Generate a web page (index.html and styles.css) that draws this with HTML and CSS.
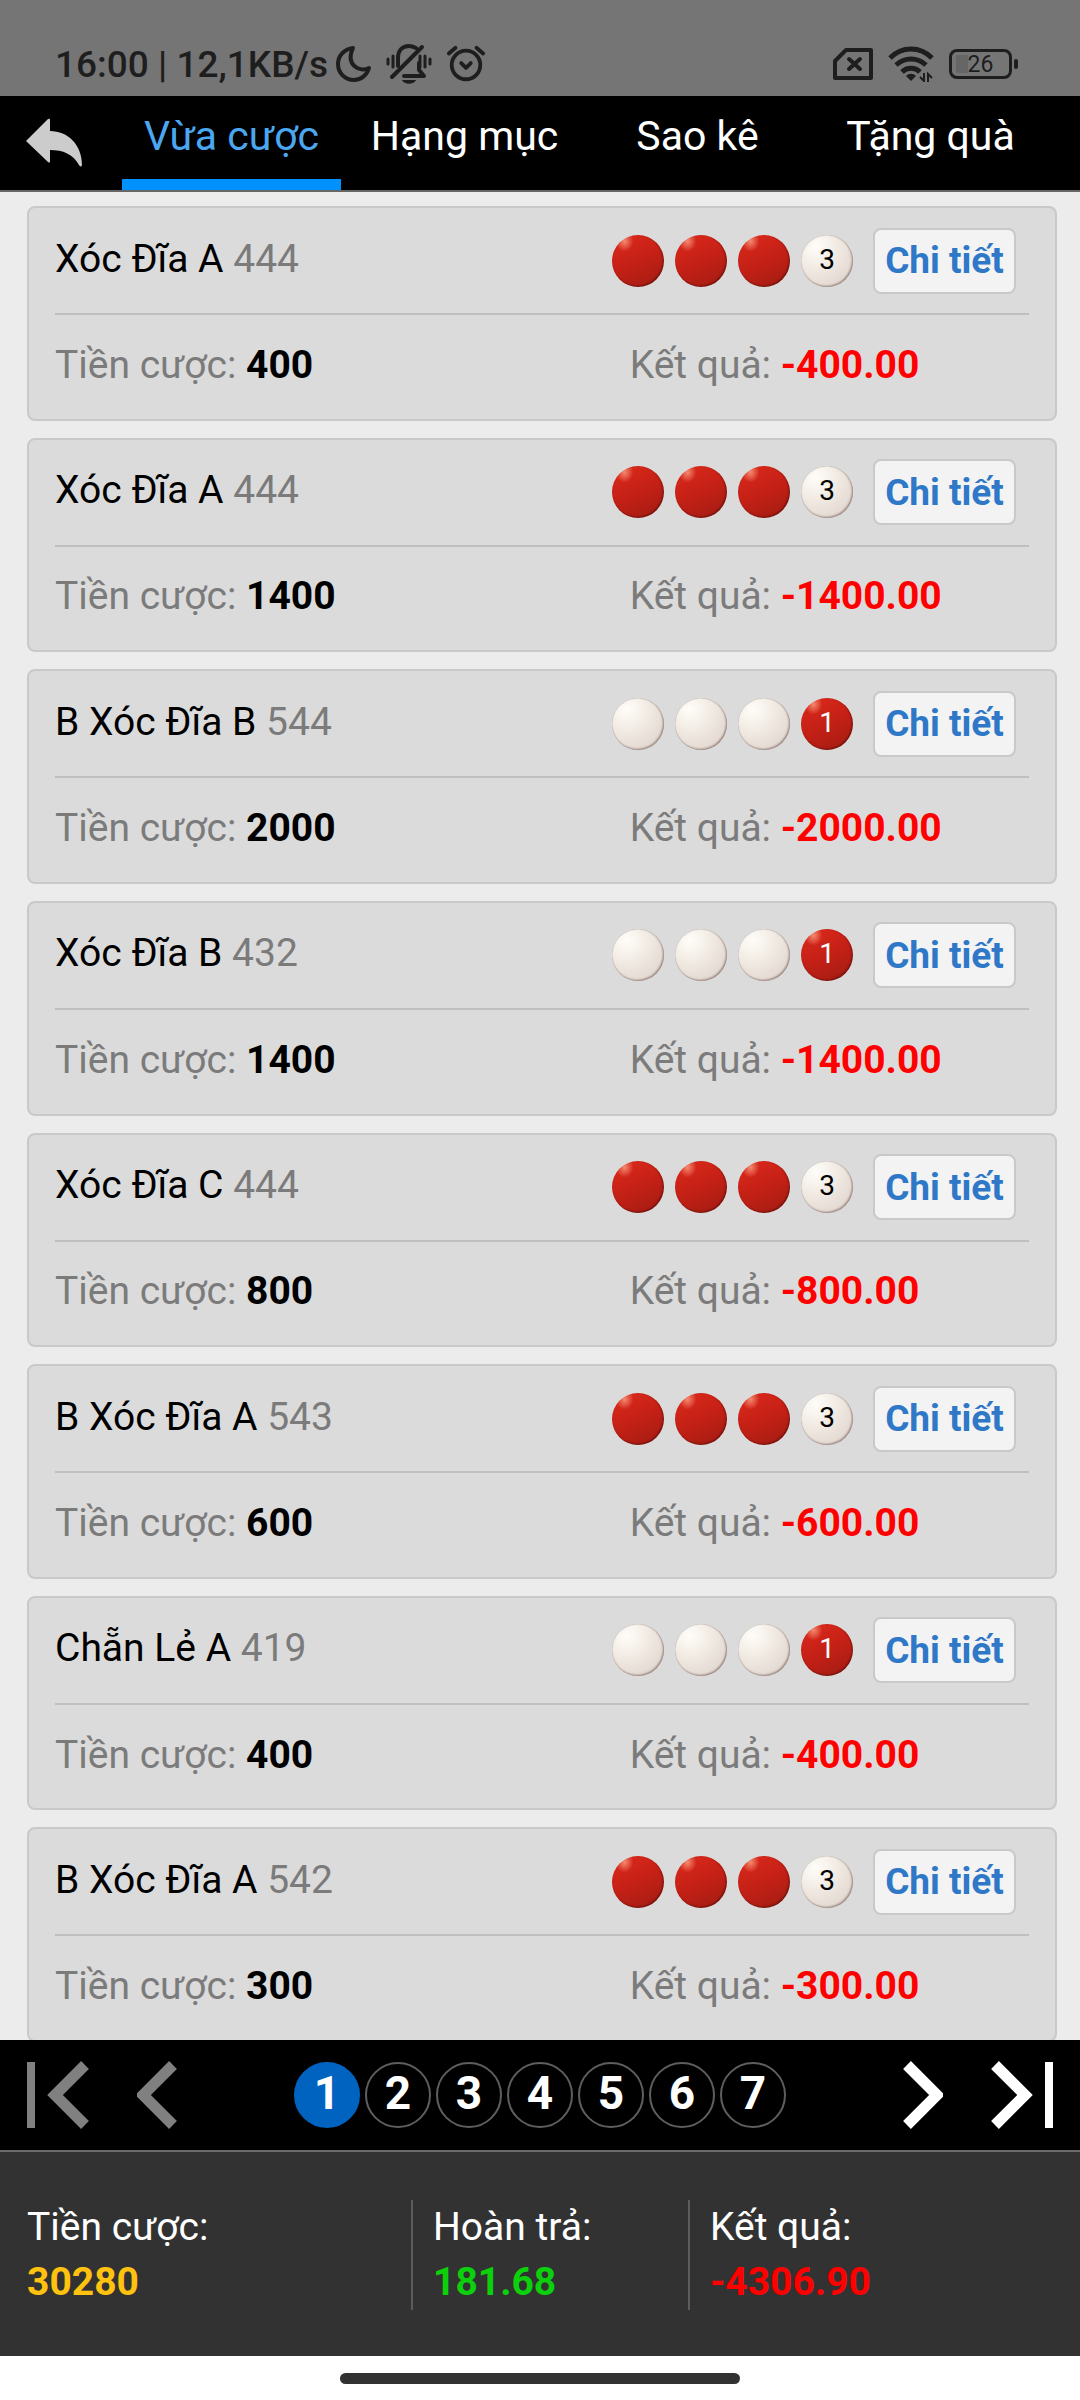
FILE: index.html
```
<!DOCTYPE html>
<html lang="vi">

<head>
    <meta charset="UTF-8">
    <meta name="viewport" content="width=device-width, initial-scale=1.0">
    <title>Vừa cược</title>
    <link rel="stylesheet" href="styles.css">
</head>

<body>
    <div class="status-bar">
        <span class="status-text">16:00 | 12,1KB/s</span>
        <svg width="36" height="38" viewBox="0 0 36 38" fill="none" stroke="#1e1e1e" stroke-width="4" stroke-linejoin="round">
            <path d="M17 3 C8 4 2 11 2 19 C2 28 9 35 18 35 C25 35 31 30 33 23 C24 28 9 20 17 3 Z"/>
        </svg>
        <svg class="icon-mute" width="46" height="40" viewBox="0 0 46 40" fill="none" stroke="#1e1e1e" stroke-width="3" stroke-linecap="round">
            <path d="M2 15v5M7 12v11M44 15v5M39 12v11M34 12v11" />
            <path d="M12 22v-8c0-7 4-12 11-12 3 0 5 1 7 2" stroke-width="4"/>
            <path d="M6 33 L36 3" stroke-width="4"/>
            <path d="M18 32h20l-5-6v-7" stroke-width="4" stroke-linejoin="round"/>
            <path d="M16 36h14c-2 5-12 5-14 0z" fill="#1e1e1e" stroke="none"/>
        </svg>
        <svg width="40" height="38" viewBox="0 0 42 38" fill="none" stroke="#1e1e1e" stroke-width="4" stroke-linecap="round" stroke-linejoin="round">
            <circle cx="21" cy="20" r="15"/>
            <path d="M16 18l5 5 5-5M3 8l7-6M39 8l-7-6"/>
        </svg>
        <div class="status-right">
            <svg width="40" height="32" viewBox="0 0 40 32" fill="none" stroke="#1e1e1e" stroke-width="4" stroke-linejoin="round">
                <path d="M13 2h25v28H2V13z"/>
                <path d="M16 11l11 10M27 11l-11 10" stroke-linecap="round"/>
            </svg>
            <svg width="46" height="36" viewBox="0 0 46 36" fill="none" stroke="#1e1e1e" stroke-width="5">
                <path d="M2 12c12-12 30-12 42 0M8 19c9-8 21-8 30 0M14 26c5-5 13-5 18 0"/>
                <path d="M18 30c3-3 7-3 10 0l-5 5z" fill="#1e1e1e" stroke="none"/>
                <path d="M36 27v8l-4-4M40 36v-8l4 4" stroke-width="2"/>
            </svg>
            <div class="battery"><span>26</span></div>
        </div>
    </div>

    <nav class="top-nav">
        <a href="#" class="back" aria-label="Quay lại">
            <svg width="56" height="50" viewBox="0 0 56 50" fill="#cccccc">
                <path d="M0 23 L22 1 Q24 0 24 2 V13 C42 13 56 27 56 47 Q55 50 53 47 C47 36 37 32 24 32 V43 Q24 46 22 44 Z"/>
            </svg>
        </a>
        <div class="tabs">
            <a href="#" class="tab active">Vừa cược</a>
            <a href="#" class="tab">Hạng mục</a>
            <a href="#" class="tab">Sao kê</a>
            <a href="#" class="tab">Tặng quà</a>
        </div>
    </nav>

    <main>
        <!-- bet cards will be added here -->
        <div class="bet-list" id="betList"></div>
    </main>

    <div class="pagination">
        <button class="page-arrow" disabled aria-label="Trang đầu">
            <svg width="62" height="68" viewBox="0 0 62 68" fill="none" stroke="currentColor">
                <path d="M4 1v66" stroke-width="8"/>
                <path d="M58 4L28 34l30 30" stroke-width="11"/>
            </svg>
        </button>
        <button class="page-arrow" disabled aria-label="Trang trước">
            <svg width="40" height="68" viewBox="0 0 40 68" fill="none" stroke="currentColor">
                <path d="M36 4L6 34l30 30" stroke-width="11"/>
            </svg>
        </button>
        <div class="pages">
            <button class="page current">1</button>
            <button class="page">2</button>
            <button class="page">3</button>
            <button class="page">4</button>
            <button class="page">5</button>
            <button class="page">6</button>
            <button class="page">7</button>
        </div>
        <button class="page-arrow" aria-label="Trang sau">
            <svg width="40" height="68" viewBox="0 0 40 68" fill="none" stroke="currentColor">
                <path d="M4 4l30 30L4 64" stroke-width="11"/>
            </svg>
        </button>
        <button class="page-arrow" aria-label="Trang cuối">
            <svg width="62" height="68" viewBox="0 0 62 68" fill="none" stroke="currentColor">
                <path d="M58 1v66" stroke-width="8"/>
                <path d="M4 4l30 30L4 64" stroke-width="11"/>
            </svg>
        </button>
    </div>

    <footer class="summary">
        <div class="total">
            <div>Tiền cược:</div>
            <div class="amount yellow">30280</div>
        </div>
        <div class="total">
            <div>Hoàn trả:</div>
            <div class="amount green">181.68</div>
        </div>
        <div class="total">
            <div>Kết quả:</div>
            <div class="amount red">-4306.90</div>
        </div>
    </footer>

    <div class="home-bar"><span></span></div>

    <script>
        // red: number of red balls out of four
        const bets = [
            { game: 'Xóc Đĩa A', round: 444, red: 3, stake: 400 },
            { game: 'Xóc Đĩa A', round: 444, red: 3, stake: 1400 },
            { game: 'B Xóc Đĩa B', round: 544, red: 1, stake: 2000 },
            { game: 'Xóc Đĩa B', round: 432, red: 1, stake: 1400 },
            { game: 'Xóc Đĩa C', round: 444, red: 3, stake: 800 },
            { game: 'B Xóc Đĩa A', round: 543, red: 3, stake: 600 },
            { game: 'Chẵn Lẻ A', round: 419, red: 1, stake: 400 },
            { game: 'B Xóc Đĩa A', round: 542, red: 3, stake: 300 }
        ];

        const betList = document.getElementById('betList');

        bets.forEach((bet) => {
            const many = bet.red === 3 ? 'ball-red' : 'ball-white';
            const last = bet.red === 3 ? 'ball-white' : 'ball-red';
            const card = document.createElement('div');
            card.className = 'card';
            card.innerHTML = `
                <div class="card-top">
                    <div class="game">${bet.game} <span>${bet.round}</span></div>
                    <div class="balls">
                        <span class="ball ${many}"></span>
                        <span class="ball ${many}"></span>
                        <span class="ball ${many}"></span>
                        <span class="ball ${last}">${bet.red}</span>
                    </div>
                    <button class="detail-btn">Chi tiết</button>
                </div>
                <div class="card-bottom">
                    <div>Tiền cược: <b>${bet.stake}</b></div>
                    <div>Kết quả: <b class="loss">-${bet.stake}.00</b></div>
                </div>
            `;
            betList.appendChild(card);
        });
    </script>
</body>

</html>
```
FILE: styles.css
```
* {
    box-sizing: border-box;
}

body {
    font-family: Roboto, sans-serif;
    font-size: 39px;
    background-color: #ececec;
    margin: 0;
    display: flex;
    flex-direction: column;
    height: 100vh;
}

a {
    text-decoration: none;
}

button {
    font-family: inherit;
    padding: 0;
    border: none;
    background: none;
}

svg {
    display: block;
}

/* status bar */
.status-bar {
    height: 96px;
    flex-shrink: 0;
    padding: 32px 68px 0 55px;
    background-color: #757575;
    color: #1e1e1e;
    display: flex;
    align-items: center;
}

.status-text {
    font-size: 37px;
    font-weight: 500;
    margin-right: 8px;
}

.icon-mute {
    margin: 0 14px;
}

.status-right {
    margin-left: auto;
    display: flex;
    align-items: center;
    gap: 15px;
}

.battery {
    position: relative;
    width: 63px;
    height: 30px;
    border: 3px solid #1e1e1e;
    border-radius: 8px;
    background: linear-gradient(#666, #666) 4px center / 12px 18px no-repeat;
    font-size: 23px;
    line-height: 26px;
    text-align: center;
}

.battery::after {
    content: "";
    position: absolute;
    top: 7px;
    right: -9px;
    width: 4px;
    height: 10px;
    border-radius: 2px;
    background-color: #1e1e1e;
}

/* top tabs */
.top-nav {
    height: 96px;
    flex-shrink: 0;
    background-color: #000;
    border-bottom: 2px solid #666;
    padding-right: 33px;
    display: flex;
}

.back {
    width: 115px;
    padding: 22px 0 0 26px;
}

.tabs {
    flex: 1;
    display: flex;
}

.tab {
    flex: 1;
    margin: 0 7px;
    border-bottom: 11px solid transparent;
    color: #fff;
    font-size: 41px;
    line-height: 81px;
    text-align: center;
    white-space: nowrap;
}

.tab.active {
    color: #4ba7f0;
    border-bottom-color: #0091ff;
}

/* bet list */
main {
    flex: 1;
    min-height: 0;
    padding: 14px 23px 0 27px;
    overflow: hidden;
    display: flex;
}

.bet-list {
    flex: 1;
    margin-bottom: -2px;
    display: flex;
    flex-direction: column;
    gap: 17px;
}

.card {
    flex: 1;
    min-height: 0;
    padding: 0 26px;
    background-color: #dbdbdb;
    border: 2px solid #c9c9c9;
    border-radius: 8px;
    display: flex;
    flex-direction: column;
}

.card-top {
    height: 107px;
    display: flex;
    align-items: center;
    padding-right: 13px;
    border-bottom: 2px solid #bfbfbf;
}

.game {
    flex: 1;
    padding-bottom: 4px;
    color: #000;
}

.game span {
    color: #7b7b7b;
}

.balls {
    display: flex;
    gap: 11px;
    margin-right: 20px;
}

.ball {
    width: 52px;
    height: 52px;
    border-radius: 50%;
    font-size: 28px;
    line-height: 50px;
    text-align: center;
}

.ball-red {
    color: #fff;
    background: radial-gradient(ellipse at 24% 12%, #f58a70 0, rgba(220, 40, 26, 0) 16%), linear-gradient(155deg, #d6271a 15%, #c42016 50%, #a81d13 90%);
    box-shadow: inset -1px -1px 2px #6b120c;
}

.ball-white {
    color: #000;
    background: radial-gradient(circle at 28% 22%, #fffdf9 0, #efe8e0 45%, #e2d8d1 80%, #d2c5be 100%);
    box-shadow: inset -1px -1px 2px #98847d, inset 0 0 1px #a89c95;
}

.detail-btn {
    width: 143px;
    height: 66px;
    background-color: #f3f3f3;
    border: 2px solid #c9c9c9;
    border-radius: 8px;
    color: #2f78c8;
    font-size: 37px;
    font-weight: bold;
    white-space: nowrap;
}

.card-bottom {
    flex: 1;
    display: grid;
    grid-template-columns: 59% 41%;
    align-items: center;
    padding-bottom: 4px;
    color: #7b7b7b;
    white-space: nowrap;
}

.card-bottom b {
    color: #000;
}

.card-bottom .loss {
    color: #f00;
}

/* pagination */
.pagination {
    height: 112px;
    flex-shrink: 0;
    padding: 0 27px;
    background-color: #000;
    border-bottom: 2px solid #6b6b6b;
    display: flex;
    align-items: center;
    gap: 48px;
}

.page-arrow {
    color: #fff;
}

.page-arrow:disabled {
    color: #808080;
}

.pages {
    flex: 1;
    display: flex;
    justify-content: center;
    gap: 5px;
}

.page {
    width: 66px;
    height: 66px;
    padding-bottom: 4px;
    border: 2px solid #5e5e5e;
    border-radius: 50%;
    color: #fff;
    font-size: 46px;
    font-weight: bold;
    line-height: 58px;
}

.page.current {
    background-color: #0063c0;
    border-color: #0063c0;
}

/* totals */
.summary {
    height: 204px;
    flex-shrink: 0;
    padding: 2px 27px 0;
    background-color: #323232;
    color: #fff;
    display: grid;
    grid-template-columns: 384fr 277fr 365fr;
    align-items: center;
}

.total {
    height: 110px;
    line-height: 55px;
}

.total + .total {
    padding-left: 20px;
    border-left: 2px solid #5c5c5c;
}

.amount {
    font-weight: bold;
}

.yellow {
    color: #ffc20e;
}

.green {
    color: #0bd00b;
}

.red {
    color: #f00;
}

.home-bar {
    height: 44px;
    flex-shrink: 0;
    background-color: #fff;
    display: flex;
    align-items: center;
    justify-content: center;
}

.home-bar span {
    width: 37%;
    height: 11px;
    border-radius: 6px;
    background-color: #323232;
}
```
